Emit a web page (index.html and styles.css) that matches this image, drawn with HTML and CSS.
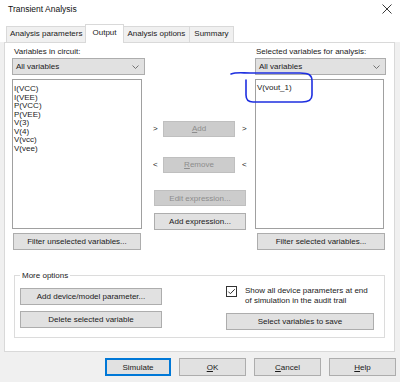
FILE: index.html
```html
<!DOCTYPE html>
<html>
<head>
<meta charset="utf-8">
<link rel="stylesheet" href="styles.css">
</head>
<body>
<div class="dialog">
  <div class="titlebar">
    <span class="title">Transient Analysis</span>
    <svg class="close" width="10" height="10" viewBox="0 0 10 10"><path d="M0.5 0.5 L9.5 9.5 M9.5 0.5 L0.5 9.5" stroke="#222" stroke-width="0.9" fill="none"/></svg>
  </div>
  <div class="tabs">
    <div class="tab">Analysis parameters</div>
    <div class="tab active">Output</div>
    <div class="tab">Analysis options</div>
    <div class="tab">Summary</div>
  </div>
  <div class="panel">
    <div class="top">
      <div class="col left">
        <div class="label">Variables in circuit:</div>
        <div class="combo"><span>All variables</span><svg class="chev" width="7" height="4" viewBox="0 0 7 4"><path d="M0.5 0.5 L3.5 3.5 L6.5 0.5" stroke="#666" stroke-width="0.9" fill="none"/></svg></div>
        <div class="list">
          <div>I(VCC)</div><div>I(VEE)</div><div>P(VCC)</div><div>P(VEE)</div><div>V(3)</div><div>V(4)</div><div>V(vcc)</div><div>V(vee)</div>
        </div>
        <div class="btn filter-l">Filter unselected variables...</div>
      </div>
      <div class="col mid">
        <div class="move add-row"><span class="arr">&gt;</span><div class="btn dis mv"><u>A</u>dd</div><span class="arr">&gt;</span></div>
        <div class="move rem-row"><span class="arr">&lt;</span><div class="btn dis mv"><u>R</u>emove</div><span class="arr">&lt;</span></div>
        <div class="btn dis expr edit">Edit expression...</div>
        <div class="btn expr addx">Add expression...</div>
      </div>
      <div class="col right">
        <div class="label">Selected variables for analysis:</div>
        <div class="combo"><span>All variables</span><svg class="chev" width="7" height="4" viewBox="0 0 7 4"><path d="M0.5 0.5 L3.5 3.5 L6.5 0.5" stroke="#666" stroke-width="0.9" fill="none"/></svg></div>
        <div class="list list-r">
          <div>V(vout_1)</div>
        </div>
        <div class="btn filter-r">Filter selected variables...</div>
      </div>
    </div>
    <div class="group">
      <div class="legend">More options</div>
      <div class="g-left">
        <div class="btn gbtn">Add device/model parameter...</div>
        <div class="btn gbtn">Delete selected variable</div>
      </div>
      <div class="g-right">
        <div class="check-row">
          <svg class="cb" width="11" height="11" viewBox="0 0 11 11"><rect x="0.5" y="0.5" width="10" height="10" fill="#fff" stroke="#333"/><path d="M2.3 5.6 L4.4 7.7 L8.8 3.2" stroke="#333" stroke-width="1" fill="none"/></svg>
          <div class="check-text">Show all device parameters at end<br>of simulation in the audit trail</div>
        </div>
        <div class="btn save">Select variables to save</div>
      </div>
    </div>
  </div>
  <div class="footer">
    <div class="btn fbtn default">Simulate</div>
    <div class="btn fbtn"><u>O</u>K</div>
    <div class="btn fbtn"><u>C</u>ancel</div>
    <div class="btn fbtn"><u>H</u>elp</div>
  </div>
  <svg class="annot" width="400" height="382" viewBox="0 0 400 382"><path d="M231 74 C236 72 242 73 250 73 L300 73 C309 73 312 75 312 81 L312 95 C312 100 309 102 302 102 L253 102 C248 102 246 100 246 95 L246 80" stroke="#1e2fe0" stroke-width="1.6" fill="none" stroke-linecap="round"/></svg>
</div>
</body>
</html>
```

FILE: styles.css
```css
* { box-sizing: border-box; }
html, body { margin: 0; padding: 0; }
body {
  width: 400px;
  height: 382px;
  overflow: hidden;
  background: #f0f0f0;
  font-family: "Liberation Sans", Arial, sans-serif;
  font-size: 8px;
  color: #1a1a1a;
}
.dialog { position: relative; width: 400px; height: 382px; }
.titlebar {
  height: 18px;
  background: #fff;
  display: flex;
  align-items: center;
  justify-content: space-between;
  padding: 0 8px 0 8px;
}
.title { font-size: 8.5px; color: #111; }
.tabs {
  display: flex;
  align-items: flex-end;
  height: 24px;
  padding-left: 6px;
  background: #fff;
}
.tab {
  height: 16px;
  line-height: 14px;
  border: 1px solid #d9d9d9;
  border-bottom: none;
  border-right: none;
  padding: 0 3px;
  background: #f0f0f0;
  white-space: nowrap;
}
.tab:nth-child(3) { padding: 0 4px; }
.tab:last-child { border-right: 1px solid #d9d9d9; padding: 0 4px; }
.tab.active {
  height: 19px;
  line-height: 15px;
  background: #fff;
  border-right: 1px solid #d9d9d9;
  margin-bottom: -1px;
  position: relative;
  z-index: 1;
  padding: 0 6px;
}
.tab.active + .tab { border-left: none; }
.panel {
  margin-left: 4px;
  width: 391px;
  height: 310px;
  border: 1px solid #d9d9d9;
  background: #fff;
}
.top {
  display: flex;
  padding: 3px 0 0 7px;
}
.col { display: flex; flex-direction: column; }
.left { width: 133px; }
.mid { width: 103px; margin-left: 3px; }
.right { width: 131px; margin-left: 4px; }
.label { height: 11px; line-height: 11px; margin-bottom: 1px; padding-left: 2px; white-space: nowrap; }
.right .label { padding-left: 1px; }
.combo {
  height: 17px;
  background: #e1e1e1;
  border: 1px solid #adadad;
  display: flex;
  align-items: center;
  justify-content: space-between;
  padding: 0 5px 0 3px;
}
.list {
  margin-top: 4px;
  width: 130px;
  height: 150px;
  border: 1px solid #a0a0a0;
  background: #fff;
  padding: 5px 1px;
  font-size: 8px;
  line-height: 8.5px;
}
.list-r { width: 129px; padding-top: 4px; }
.btn {
  height: 17px;
  background: #e1e1e1;
  border: 1px solid #adadad;
  display: flex;
  align-items: center;
  justify-content: center;
  white-space: nowrap;
}
.btn.dis { background: #cccccc; border-color: #bfbfbf; color: #8d8d8d; }
.filter-l { margin-top: 4px; margin-left: 1px; width: 128px; }
.filter-r { margin-top: 4px; margin-left: 2px; width: 128px; }
.move { display: flex; align-items: center; height: 17px; }
.arr { width: 15px; padding-left: 5px; color: #222; font-size: 8px; }
.move .arr:last-child { padding-left: 7px; }
.mv { width: 72px; height: 16px; }
.add-row { margin-top: 74px; }
.rem-row { margin-top: 19px; }
.expr { width: 92px; margin-left: 6px; }
.edit { margin-top: 17px; height: 16px; }
.addx { margin-top: 7px; }
.group {
  position: relative;
  margin: 25px 0 0 9px;
  width: 371px;
  height: 63px;
  border: 1px solid #dcdcdc;
  display: flex;
  padding: 12px 0 0 5px;
}
.legend {
  position: absolute;
  left: 5px;
  top: -6px;
  background: #fff;
  padding: 0 2px;
  line-height: 11px;
}
.g-left { display: flex; flex-direction: column; gap: 6px; width: 142px; }
.gbtn { width: 142px; }
.g-right { margin-left: 64px; display: flex; flex-direction: column; }
.check-row { display: flex; align-items: flex-start; margin-top: -2px; }
.check-text { margin-left: 8px; line-height: 10px; }
.save { width: 148px; margin-top: 7px; }
.footer {
  display: flex;
  justify-content: flex-end;
  gap: 8px;
  padding-right: 4px;
  margin-top: 6px;
}
.fbtn { width: 67px; height: 18px; }
.fbtn.default { border: 2px solid #0078d7; width: 66px; }
.annot { position: absolute; left: 0; top: 0; pointer-events: none; }
```
